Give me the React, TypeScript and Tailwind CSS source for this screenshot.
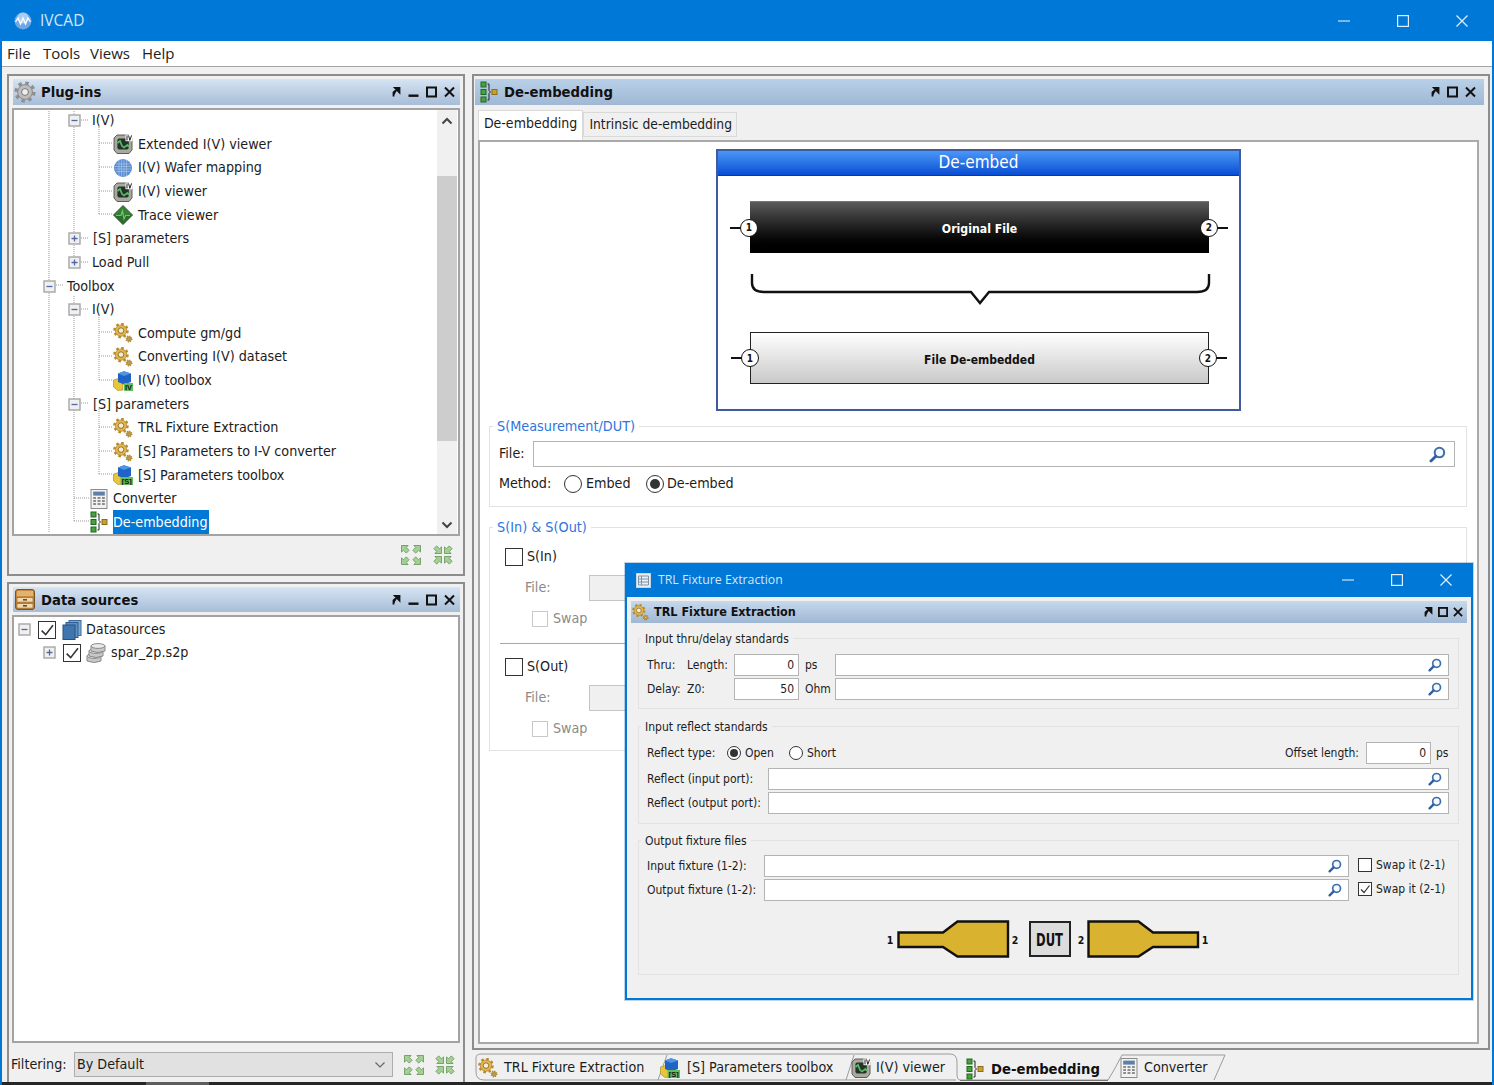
import React from "react";

const I = ({ w = 20, h = 20, vb = "0 0 20 20", children, className = "" }: any) => (
  <svg width={w} height={h} viewBox={vb} className={"shrink-0 " + className}>{children}</svg>
);

const BigGear = () => (
  <I w={22} h={22} vb="0 0 22 22">
    <circle cx="11" cy="11" r="8.8" fill="none" stroke="#8f8f8f" strokeWidth="3.6" strokeDasharray="3.45 3.46" />
    <circle cx="11" cy="11" r="7.4" fill="#bcbcbc" stroke="#8a8a8a" />
    <circle cx="11" cy="11" r="3.4" fill="#efefef" stroke="#777" />
  </I>
);

const OneGear = ({ cx, cy, r, t }: any) => {
  const d = ((2 * Math.PI * r) / 16).toFixed(3);
  return (
    <g>
      <circle cx={cx} cy={cy} r={r} fill="none" stroke="#b98c2a" strokeWidth={t} strokeDasharray={d + " " + d} />
      <circle cx={cx} cy={cy} r={r - t / 2 + 0.3} fill="#e4b54a" stroke="#96752a" strokeWidth="0.6" />
      <circle cx={cx} cy={cy} r={r * 0.42} fill="#f4ecd4" stroke="#7c5e1c" strokeWidth="0.8" />
    </g>
  );
};
const Gears = () => (
  <I>
    <OneGear cx={8} cy={7.6} r={6.6} t={2.4} />
    <OneGear cx={16} cy={16} r={2.8} t={1.5} />
  </I>
);

const Viewer = () => (
  <I>
    <path d="M4 1 H16 L19 4.5 V16 L16 19.5 H4 L1 16 V4 Z" fill="#a9a99f" stroke="#50504a" strokeWidth="0.9" />
    <rect x="4.4" y="4.5" width="11.4" height="11" rx="2" fill="#24332a" />
    <path d="M4.5 9 L7 7 L9 12 L11 13.4 L14.5 11 L16 13" fill="none" stroke="#59b866" strokeWidth="1.7" />
    <rect x="12.5" y="0.6" width="7" height="6.6" fill="#fff" />
    <path d="M14 1.4 V6.4 M15.6 1.4 L16.8 6.4 L18.6 1.4" fill="none" stroke="#222" strokeWidth="1" />
  </I>
);

const Wafer = () => (
  <I>
    <circle cx="10" cy="10" r="9" fill="#5b8dd0" />
    <path d="M3 6 H17 M2 8.5 H18 M2 11 H18 M3 13.5 H17 M6 2 V18 M8.5 1.5 V18.5 M11 1.5 V18.5 M13.5 2 V18" stroke="#a9c6ec" strokeWidth="0.7" />
  </I>
);

const Trace = () => (
  <I>
    <path d="M10 0.5 L19.5 10 L10 19.5 L0.5 10Z" fill="#3a7d38" stroke="#2e5f2e" />
    <path d="M10 10 L19.5 10 L10 19.5 L0.5 10Z" fill="#2f6a30" />
    <path d="M3 10.5 H8 L9.5 6 L11 14 L12.5 10.5 H17" fill="none" stroke="#62d060" strokeWidth="1.2" />
  </I>
);

const Toolbox = ({ s }: { s: boolean }) => (
  <I>
    <path d="M0.5 9 L7 7 L10 9 V19 L5 19.5 L0.5 16Z" fill="#e8c63c" stroke="#a0851f" strokeWidth="0.6" />
    <path d="M5 2.5 L11 0.3 L18 2.5 V11 L11 13.5 L5 11Z" fill="#1f63c6" />
    <path d="M5 2.5 L11 5 L18 2.5 L11 0.3Z" fill="#4f94e6" />
    <rect x={s ? 7.5 : 11} y="12" width={s ? 12.5 : 9} height="8" fill="#62bd5f" />
    <text x={s ? 13.7 : 15.5} y="19" textAnchor="middle" fontSize="7.5" fontWeight="700" fill="#111" fontFamily="Liberation Sans">{s ? "[S]" : "IV"}</text>
  </I>
);

const Calc = () => (
  <I w={18} h={20} vb="0 0 18 20">
    <rect x="1" y="0.5" width="16" height="19" fill="#f2f2f2" stroke="#8b8b8b" />
    <rect x="3.2" y="2.6" width="11.6" height="4" fill="#5e7fa8" />
    <path d="M3.2 9 H6 M7.5 9 H10.5 M12 9 H14.8 M3.2 12 H6 M7.5 12 H10.5 M12 12 H14.8 M3.2 15 H6 M7.5 15 H10.5 M12 15 H14.8" stroke="#8d8d8d" strokeWidth="1.8" />
  </I>
);

const Deembed = () => (
  <I w={18} h={22} vb="0 0 18 22">
    <rect x="1" y="1" width="5" height="5" fill="#4aa03f" stroke="#1d6a1d" />
    <rect x="1" y="8.5" width="5" height="5" fill="#4aa03f" stroke="#1d6a1d" />
    <rect x="1" y="16" width="5" height="5" fill="#4aa03f" stroke="#1d6a1d" />
    <path d="M7.5 3 H9 V9.5 L10.5 11 L9 12.5 V19 H7.5" fill="none" stroke="#222" strokeWidth="1" />
    <rect x="12" y="8.5" width="5" height="5" fill="#c9a12f" stroke="#8a6e18" />
  </I>
);

const Books = () => (
  <I>
    <rect x="7" y="0.5" width="12" height="15" fill="#7fa6cf" stroke="#3c6c9e" />
    <rect x="4" y="2.5" width="12" height="15" fill="#5f8fc0" stroke="#2f5f92" />
    <rect x="1" y="5" width="12" height="14.5" fill="#3f76b0" stroke="#24527f" />
  </I>
);

const DB = () => (
  <I w={21} h={21} vb="0 0 21 21">
    {[13, 8, 3].map((y, i) => (
      <g key={i}>
        <path d={`M${i * 2 + 1} ${y + 1} V${y + 6} Q${i * 2 + 8} ${y + 9} ${i * 2 + 15} ${y + 6} V${y + 1}Z`} fill="#c8c8c8" stroke="#8a8a8a" />
        <ellipse cx={i * 2 + 8} cy={y + 1} rx="7" ry="2.4" fill="#e9e9e9" stroke="#8a8a8a" />
      </g>
    ))}
  </I>
);

const Drawer = () => (
  <I w={20} h={21} vb="0 0 20 21">
    <rect x="0.5" y="0.5" width="19" height="20" rx="2.5" fill="#c8883e" stroke="#7e5320" />
    <rect x="2" y="2" width="16" height="5" fill="#e2b36e" />
    <rect x="2" y="8.5" width="16" height="4.6" fill="#f0d9ae" stroke="#8a5c24" strokeWidth="0.6" />
    <rect x="2" y="14.5" width="16" height="4.6" fill="#f0d9ae" stroke="#8a5c24" strokeWidth="0.6" />
    <rect x="8" y="10" width="4" height="1.6" fill="#6e4a1c" />
    <rect x="8" y="16" width="4" height="1.6" fill="#6e4a1c" />
  </I>
);

const Expander = ({ open }: { open?: boolean }) => (
  <I w={13} h={13} vb="0 0 13 13">
    <rect x="1" y="1" width="11" height="11" fill="#f0f0f0" stroke="#a6a6a6" strokeWidth="1.4" />
    <path d={open ? "M3.5 6.5 H9.5" : "M3.5 6.5 H9.5 M6.5 3.5 V9.5"} stroke="#5267a8" strokeWidth="1.3" />
  </I>
);

const Search = ({ big }: { big?: boolean }) => (
  <I w={big ? 17 : 14} h={big ? 17 : 14} vb="0 0 14 14">
    <circle cx="8.6" cy="5.4" r="3.9" fill="#f5f9fd" stroke="#3f70ad" strokeWidth="1.7" />
    <path d="M5.6 8.4 L1.6 12.4" stroke="#2e5f9f" strokeWidth="2.3" strokeLinecap="round" />
  </I>
);

const DockBtns = ({ small, noMin }: { small?: boolean; noMin?: boolean }) => (
  <div className={"flex items-center " + (small ? "gap-[5px]" : "gap-[7px]")}>
    <I w={10} h={12} vb="0 0 10 12">
      <path d="M2.5 10.5 V6.5 L7 2.5 M4 2 H8.5 V6.5Z" fill="#111" stroke="#111" strokeWidth="1.8" />
    </I>
    {!noMin && (
      <I w={11} h={12} vb="0 0 11 12">
        <rect x="0.5" y="8.5" width="10" height="2.4" fill="#111" />
      </I>
    )}
    <I w={small ? 10 : 11} h={12} vb="0 0 11 12">
      <rect x="1" y="1.5" width="9" height="9" fill="none" stroke="#111" strokeWidth="2" />
    </I>
    <I w={small ? 10 : 11} h={12} vb="0 0 11 12">
      <path d="M1 1.5 L10 10.5 M10 1.5 L1 10.5" stroke="#111" strokeWidth="2" />
    </I>
  </div>
);

const Arrow = ({ x, y, r }: any) => (
  <path transform={`translate(${x} ${y}) rotate(${r})`} d="M-4 -4 H2.6 L0.8 -2 L3.6 0.8 L0.8 3.6 L-2 0.8 L-4 2.6Z" fill="#a5cf97" stroke="#5f9453" strokeWidth="0.8" />
);
const ExpandAll = ({ inward }: { inward?: boolean }) => (
  <I w={22} h={22} vb="0 0 22 22">
    <Arrow x={5.5} y={5.5} r={inward ? 180 : 0} />
    <Arrow x={16.5} y={5.5} r={inward ? 270 : 90} />
    <Arrow x={16.5} y={16.5} r={inward ? 0 : 180} />
    <Arrow x={5.5} y={16.5} r={inward ? 90 : 270} />
  </I>
);

const Chev = ({ up, thin }: { up?: boolean; thin?: boolean }) => (
  <I w={12} h={12} vb="0 0 12 12">
    <path d={up ? "M1.5 8.5 L6 4 L10.5 8.5" : "M1.5 3.5 L6 8 L10.5 3.5"} fill="none" stroke={thin ? "#666" : "#444"} strokeWidth={thin ? 1.2 : 2} />
  </I>
);

const Radio = ({ on, big }: { on?: boolean; big?: boolean }) => (
  <span className={"flex items-center justify-center rounded-full border-[1.5px] border-[#333] bg-white shrink-0 " + (big ? "w-[18px] h-[18px]" : "w-[14px] h-[14px]")}>
    {on && <span className={"rounded-full bg-[#333] " + (big ? "w-[10px] h-[10px]" : "w-[8px] h-[8px]")} />}
  </span>
);

const Check = ({ on, size = "w-[18px] h-[18px]", dim }: any) => (
  <span className={"flex items-center justify-center border-[1.5px] shrink-0 bg-white " + size + " " + (dim ? "border-[#c9c9c9]" : "border-[#333]")}>
    {on && (
      <svg viewBox="0 0 12 12" className="w-full h-full">
        <path d="M2 6.5 L5 9.5 L10.5 2.5" fill="none" stroke="#333" strokeWidth="1.2" />
      </svg>
    )}
  </span>
);

const rows: any[] = [
  { k: "f", pad: "pl-[54px]", gap: "ml-[11px]", open: true, t: "I(V)" },
  { k: "l", ic: <Viewer />, t: "Extended I(V) viewer" },
  { k: "l", ic: <Wafer />, t: "I(V) Wafer mapping" },
  { k: "l", ic: <Viewer />, t: "I(V) viewer" },
  { k: "l", ic: <Trace />, t: "Trace viewer" },
  { k: "f", pad: "pl-[54px]", gap: "ml-[12px]", t: "[S] parameters" },
  { k: "f", pad: "pl-[54px]", gap: "ml-[11px]", t: "Load Pull" },
  { k: "f", pad: "pl-[29px]", gap: "ml-[11px]", open: true, t: "Toolbox" },
  { k: "f", pad: "pl-[54px]", gap: "ml-[11px]", open: true, t: "I(V)" },
  { k: "l", ic: <Gears />, t: "Compute gm/gd" },
  { k: "l", ic: <Gears />, t: "Converting I(V) dataset" },
  { k: "l", ic: <Toolbox s={false} />, t: "I(V) toolbox" },
  { k: "f", pad: "pl-[54px]", gap: "ml-[12px]", open: true, t: "[S] parameters" },
  { k: "l", ic: <Gears />, t: "TRL Fixture Extraction" },
  { k: "l", ic: <Gears />, t: "[S] Parameters to I-V converter" },
  { k: "l", ic: <Toolbox s />, t: "[S] Parameters toolbox" },
  { k: "m", ic: <Calc />, t: "Converter" },
  { k: "m", ic: <Deembed />, t: "De-embedding", sel: true },
];

const TreeRow = ({ r }: { r: any }) => {
  if (r.k === "f")
    return (
      <div className={"flex items-center h-[23.63px] " + r.pad}>
        <Expander open={r.open} />
        <span className={r.gap}>{r.t}</span>
      </div>
    );
  if (r.k === "l")
    return (
      <div className="flex items-center h-[23.63px] pl-[99px]">
        {r.ic}
        <span className="ml-[5px]">{r.t}</span>
      </div>
    );
  return (
    <div className="flex items-center h-[23.63px] pl-[76px]">
      {r.ic}
      <span className={"ml-[5px] " + (r.sel ? "bg-[#0078d7] text-white h-[24px] w-[96px] flex items-center" : "")}>{r.t}</span>
    </div>
  );
};

const TreeLines = () => (
  <svg width="421" height="424" viewBox="14 110 421 424" className="absolute left-0 top-0">
    <path
      d="M49 110 V534 M74 110 V262 M74 297 V522 M99 128 V215 M99 316 V381 M99 410 V475 M81 121 H89 M99 144 H112 M99 168 H112 M99 192 H112 M99 215 H112 M81 239 H89 M81 263 H89 M56 286 H63 M81 310 H89 M99 333 H112 M99 357 H112 M99 381 H112 M81 404 H89 M99 428 H112 M99 452 H112 M99 475 H112 M74 499 H89 M74 522 H89"
      fill="none"
      stroke="#9a9a9a"
      strokeDasharray="1 1"
    />
  </svg>
);

const Input = ({ cls, search, big, val, disabled }: any) => (
  <div className={"flex items-center justify-end border-[1.5px] shrink-0 " + (disabled ? "bg-[#f0f0f0] border-[#c4c4c4]" : "bg-white border-[#b4b4b4]") + " " + cls}>
    {search && <span className={big ? "mr-[8px]" : "mr-[6px]"}><Search big={big} /></span>}
    {val && <span className="pr-[4px]">{val}</span>}
  </div>
);

const Group = ({ legend, blue, cls, children }: any) => (
  <div className={"relative border border-[#e2e2e2] " + cls}>
    <span className={"absolute px-[4px] leading-[18px] " + (blue ? "-top-[10px] left-[3px] bg-white text-[#2f74df] text-[14.3px]" : "-top-[9px] left-[2px] bg-[#f0f0f0]")}>{legend}</span>
    {children}
  </div>
);

const Fixture = () => (
  <svg width="330" height="38" viewBox="884 920 330 38" className="block">
    <path d="M898.5 932.5 H943 L957.5 921.5 H1008 V956.5 H957.5 L943 947 H898.5Z" fill="#d9b230" stroke="#111" strokeWidth="2.4" />
    <path d="M1198 932.5 H1153 L1138.5 921.5 H1088.5 V956.5 H1138.5 L1153 947 H1198Z" fill="#d9b230" stroke="#111" strokeWidth="2.4" />
    <rect x="1030" y="922" width="40" height="34" fill="#dcdcdc" stroke="#222" strokeWidth="2" />
    <g fontFamily="DejaVu Sans Condensed, Liberation Sans, sans-serif" fontWeight="700" fill="#111">
      <text x="1036" y="946" fontSize="18" textLength="27" lengthAdjust="spacingAndGlyphs">DUT</text>
      <text x="890" y="944" textAnchor="middle" fontSize="10.5">1</text>
      <text x="1015" y="944" textAnchor="middle" fontSize="10.5">2</text>
      <text x="1081" y="944" textAnchor="middle" fontSize="10.5">2</text>
      <text x="1205" y="944" textAnchor="middle" fontSize="10.5">1</text>
    </g>
  </svg>
);

const TabOutline = () => (
  <svg width="770" height="32" viewBox="472 1050 770 32" className="absolute left-0 top-0">
    <path
      d="M476 1058 Q476 1054 481 1054 H950 Q957 1054 957 1062 V1074 Q957 1080 960 1080 H1108 L1114 1070 L1122 1055 H1225 L1214 1080 M476 1058 V1072 Q476 1080 484 1080 H658 L667 1055 M658 1080 H846 L854 1055 M846 1080 H956"
      fill="none"
      stroke="#9c9c9c"
    />
    <path d="M960 1080.5 H1108" stroke="#777" />
  </svg>
);

const WinBtns = ({ small }: { small?: boolean }) => (
  <div className={"flex items-center ml-auto " + (small ? "gap-[36px] pr-[18px]" : "gap-[46px] pr-[25px]")}>
    <svg width="14" height="12" viewBox="0 0 14 12"><path d="M1 6 H13" stroke="#cfe3f5" strokeWidth="1.2" /></svg>
    <svg width="12" height="12" viewBox="0 0 12 12"><rect x="0.6" y="0.6" width="10.8" height="10.8" fill="none" stroke="#e4eff9" strokeWidth="1.2" /></svg>
    <svg width="14" height="14" viewBox="0 0 14 14"><path d="M1.5 1.5 L12.5 12.5 M12.5 1.5 L1.5 12.5" stroke="#e4eff9" strokeWidth="1.2" /></svg>
  </div>
);

const Pin = ({ n, side }: { n: string; side: "l" | "r" }) => (
  <span className={"absolute top-1/2 -translate-y-1/2 flex items-center " + (side === "l" ? "-left-[20px]" : "-right-[19px] flex-row-reverse")}>
    <span className="w-[11px] h-[2px] bg-[#111]" />
    <span className="flex items-center justify-center w-[18px] h-[18px] rounded-full border-[1.5px] border-[#111] bg-white text-[#111] text-[10px] font-bold -mx-[1px] z-10">{n}</span>
  </span>
);

export default function App() {
  return (
    <div className="relative w-[1494px] h-[1085px] flex flex-col overflow-hidden border-x-2 border-[#0078d7] bg-[#f0f0f0] text-[14.2px] text-[#1c1c1c] font-['DejaVu_Sans_Condensed','Noto_Sans',sans-serif]">
      {/* title bar */}
      <div className="h-[41px] shrink-0 -mx-[2px] bg-[#0078d7] flex items-center pl-[13px] font-['Open_Sans',sans-serif]">
        <svg width="20" height="20" viewBox="0 0 20 20">
          <circle cx="10" cy="10" r="8.5" fill="#6fa6e6" />
          <circle cx="10" cy="7" r="5.5" fill="#a9cdf2" />
          <path d="M2.5 11 L5 7 L7.5 13 L10 7 L12.5 13 L15 7 L17.5 11" fill="none" stroke="#fff" strokeWidth="1.3" />
        </svg>
        <span className="ml-[7px] text-[15.5px] text-[#d5e6f6]">IVCAD</span>
        <WinBtns />
      </div>
      {/* menu */}
      <div className="h-[26px] shrink-0 bg-white border-b border-[#a5a5a5] flex items-center pl-[5px] text-[15px] text-[#222] font-['Open_Sans',sans-serif]">
        <span className="w-[36px]">File</span>
        <span className="w-[47px]">Tools</span>
        <span className="w-[52px]">Views</span>
        <span>Help</span>
      </div>
      {/* main */}
      <div className="flex-1 min-h-0 flex pt-[7px]">
        {/* left */}
        <div className="w-[458px] ml-[5px] shrink-0 flex flex-col gap-[6px]">
          <div className="h-[502px] shrink-0 border-2 border-[#8d8d8d] px-[3px] pt-[3px] flex flex-col">
            <div className="h-[26px] ml-[1px] shrink-0 bg-linear-to-b from-[#d6e4f3] to-[#a7bdd7] flex items-center pl-[1px] pr-[5px]">
              <BigGear />
              <span className="ml-[5px] font-bold text-[14.7px] text-[#111]">Plug-ins</span>
              <span className="ml-auto"><DockBtns /></span>
            </div>
            <div className="mt-[3px] h-[428px] shrink-0 border-2 border-[#a3a3a3] bg-white flex overflow-hidden">
              <div className="relative flex-1 -mt-[1px]">
                <TreeLines />
                <div className="relative">
                  {rows.map((r, i) => <TreeRow key={i} r={r} />)}
                </div>
              </div>
              <div className="w-[20px] mr-[1px] bg-[#f0f0f0] flex flex-col items-center">
                <div className="h-[22px] flex items-center"><Chev up /></div>
                <div className="h-[44px]" />
                <div className="h-[265px] w-full bg-[#cdcdcd]" />
                <div className="flex-1" />
                <div className="h-[18px] flex items-center"><Chev /></div>
              </div>
            </div>
            <div className="flex-1 flex items-center justify-end gap-[10px] pr-[6px]">
              <ExpandAll />
              <ExpandAll inward />
            </div>
          </div>
          <div className="flex-1 min-h-0 border-t-2 border-x-2 border-[#8d8d8d] px-[3px] pt-[3px] flex flex-col">
            <div className="h-[25px] ml-[1px] shrink-0 bg-linear-to-b from-[#d6e4f3] to-[#a7bdd7] flex items-center pl-[2px] pr-[5px]">
              <Drawer />
              <span className="ml-[6px] mt-[2px] font-bold text-[14.7px] text-[#111]">Data sources</span>
              <span className="ml-auto"><DockBtns /></span>
            </div>
            <div className="mt-[3px] h-[428px] shrink-0 border-2 border-[#a3a3a3] bg-white pl-[4px] pt-[1px]">
              <div className="flex items-center h-[23px]">
                <Expander open />
                <span className="ml-[7px]"><Check on /></span>
                <span className="ml-[6px]"><Books /></span>
                <span className="ml-[4px]">Datasources</span>
              </div>
              <div className="flex items-center h-[23px] pl-[25px]">
                <Expander />
                <span className="ml-[7px]"><Check on /></span>
                <span className="ml-[5px]"><DB /></span>
                <span className="ml-[4px]">spar_2p.s2p</span>
              </div>
            </div>
            <div className="flex-1 flex items-center pt-[4px]">
              <span className="w-[63px] -ml-[1px]">Filtering:</span>
              <div className="w-[319px] h-[25px] bg-[#e1e1e1] border border-[#adadad] flex items-center pl-[2px] pr-[6px]">
                <span>By Default</span>
                <span className="ml-auto"><Chev thin /></span>
              </div>
              <div className="ml-[10px] flex gap-[9px]">
                <ExpandAll />
                <ExpandAll inward />
              </div>
            </div>
          </div>
        </div>
        {/* right */}
        <div className="flex-1 min-w-0 ml-[7px] mr-[2px] flex flex-col">
          <div className="flex-1 min-h-0 border-2 border-[#8d8d8d] pt-[3px] px-[1px] pr-[4px] flex flex-col">
            <div className="h-[26px] shrink-0 bg-linear-to-b from-[#b9d0e8] to-[#a0b8d4] flex items-center pl-[5px] pr-[8px]">
              <Deembed />
              <span className="ml-[6px] font-bold text-[14.7px] text-[#111]">De-embedding</span>
              <span className="ml-auto"><DockBtns noMin /></span>
            </div>
            <div className="h-[35px] shrink-0 pl-[3px] pt-[5px] flex items-start">
              <div className="relative z-10 h-[30px] w-[105px] bg-white border border-b-0 border-[#d9d9d9] flex items-center justify-center pb-[5px] text-[14px]">De-embedding</div>
              <div className="mt-[2px] h-[25px] w-[154px] bg-[#f0f0f0] border border-[#d9d9d9] flex items-center justify-end pr-[4px] text-[13.7px]">Intrinsic de-embedding</div>
            </div>
            <div className="flex-1 min-h-0 ml-[3px] w-[1001px] border-2 border-[#a9a9a9] bg-white pl-[9px]">
              {/* diagram */}
              <div className="ml-[227px] mt-[7px] w-[525px] h-[262px] border-2 border-[#3f5aa0] flex flex-col">
                <div className="h-[25px] shrink-0 bg-linear-to-b from-[#4a97f7] to-[#0a4cd2] border-b border-[#0a3a9e] flex items-center justify-center text-white text-[17px]">De-embed</div>
                <div className="relative mt-[25px] ml-[32px] w-[459px] h-[52px] border-t border-[#777] bg-linear-to-b from-[#5c5c5c] to-black text-white font-bold text-[12.2px] flex items-center justify-center pt-[3px]">
                  Original File
                  <Pin n="1" side="l" />
                  <Pin n="2" side="r" />
                </div>
                <svg width="470" height="36" viewBox="0 0 470 36" className="ml-[32px] mt-[20px] -mb-[6px] shrink-0">
                  <path d="M2 1 V10 Q2 19 14 19 H221 L230 30 L239 19 H447 Q459 19 459 10 V1" fill="none" stroke="#111" strokeWidth="2.4" />
                </svg>
                <div className="relative mt-[29px] ml-[32px] w-[459px] h-[52px] border border-[#222] bg-linear-to-b from-white to-[#c9c9c9] text-[#111] font-bold text-[12px] flex items-center justify-center pt-[3px]">
                  File De-embedded
                  <Pin n="1" side="l" />
                  <Pin n="2" side="r" />
                </div>
              </div>
              <Group blue legend="S(Measurement/DUT)" cls="mt-[15px] w-[978px] h-[81px]">
                <div className="pt-[14px] pl-[9px] flex items-center">
                  <span className="w-[34px]">File:</span>
                  <Input cls="w-[922px] h-[26px]" search big />
                </div>
                <div className="mt-[7px] pl-[9px] flex items-center h-[20px]">
                  <span className="w-[65px]">Method:</span>
                  <Radio big />
                  <span className="ml-[4px] w-[60px]">Embed</span>
                  <Radio on big />
                  <span className="ml-[3px]">De-embed</span>
                </div>
              </Group>
              <Group blue legend="S(In) & S(Out)" cls="mt-[20px] w-[978px] h-[224px]">
                <div className="mt-[20px] h-[18px] pl-[15px] flex items-center">
                  <Check />
                  <span className="ml-[4px]">S(In)</span>
                </div>
                <div className="mt-[9px] h-[26px] pl-[35px] flex items-center text-[#8a8a8a]">
                  <span className="w-[64px]">File:</span>
                  <Input cls="w-[400px] h-[26px]" disabled />
                </div>
                <div className="mt-[10px] h-[16px] pl-[42px] flex items-center text-[#8a8a8a]">
                  <Check dim size="w-[16px] h-[16px]" />
                  <span className="ml-[5px]">Swap</span>
                </div>
                <div className="mt-[16px] mx-[10px] border-t border-[#a8a8a8]" />
                <div className="mt-[14px] h-[18px] pl-[15px] flex items-center">
                  <Check />
                  <span className="ml-[4px]">S(Out)</span>
                </div>
                <div className="mt-[9px] h-[26px] pl-[35px] flex items-center text-[#8a8a8a]">
                  <span className="w-[64px]">File:</span>
                  <Input cls="w-[400px] h-[26px]" disabled />
                </div>
                <div className="mt-[10px] h-[16px] pl-[42px] flex items-center text-[#8a8a8a]">
                  <Check dim size="w-[16px] h-[16px]" />
                  <span className="ml-[5px]">Swap</span>
                </div>
              </Group>
            </div>
            <div className="h-[4px] shrink-0" />
          </div>
          {/* bottom tabs */}
          <div className="relative h-[32px] shrink-0 flex items-center pt-[4px]">
            <TabOutline />
            <div className="relative w-[188px] pl-[6px] flex items-center"><Gears /><span className="ml-[6px]">TRL Fixture Extraction</span></div>
            <div className="relative w-[190px] flex items-center"><Toolbox s /><span className="ml-[7px]">[S] Parameters toolbox</span></div>
            <div className="relative w-[110px] pl-[1px] flex items-center"><Viewer /><span className="ml-[5px]">I(V) viewer</span></div>
            <div className="relative w-[155px] pl-[6px] pt-[3px] flex items-center"><Deembed /><span className="ml-[7px] font-bold text-[14.7px] text-[#111]">De-embedding</span></div>
            <div className="relative w-[115px] pl-[5px] flex items-center"><Calc /><span className="ml-[6px]">Converter</span></div>
          </div>
        </div>
      </div>
      {/* taskbar sliver */}
      <div className="h-[3px] shrink-0 -mx-[2px] bg-[#262626] flex">
        <div className="ml-[146px] w-[63px] bg-[#5d5d5d]" />
      </div>

      {/* floating window */}
      <div className="absolute left-[623px] top-[563px] w-[848px] h-[437px] border-2 border-t-0 border-[#0078d7] bg-[#f0f0f0] flex flex-col text-[12px] shadow-[0_0_0_1px_rgba(0,80,160,0.25)]">
        <div className="h-[34px] shrink-0 bg-[#0078d7] flex items-center pl-[9px] text-[#d5e6f6] font-['Open_Sans',sans-serif] text-[12.3px]">
          <svg width="15" height="15" viewBox="0 0 15 15">
            <rect x="0.5" y="0.5" width="14" height="14" fill="#e9eff5" stroke="#c5d5e5" />
            <path d="M2.5 3 H12.5 V12 H2.5Z M5.5 3 V12 M2.5 6 H12.5 M2.5 9 H12.5" fill="none" stroke="#7f93a8" />
          </svg>
          <span className="ml-[7px]">TRL Fixture Extraction</span>
          <WinBtns small />
        </div>
        <div className="mt-[4px] mx-[4px] h-[22px] shrink-0 bg-linear-to-b from-[#c6d9ec] to-[#a0b8d4] flex items-center pl-[1px] pr-[4px]">
          <I w={17} h={17}><OneGear cx={8} cy={7.6} r={6.6} t={2.4} /><OneGear cx={16} cy={16} r={2.8} t={1.5} /></I>
          <span className="ml-[5px] font-bold text-[12.5px] text-[#111]">TRL Fixture Extraction</span>
          <span className="ml-auto"><DockBtns small noMin /></span>
        </div>
        <Group legend="Input thru/delay standards" cls="ml-[11px] mt-[15px] w-[821px] h-[71px] shrink-0">
          <div className="pt-[15px] pl-[8px] flex items-center h-[37px]">
            <span className="w-[40px]">Thru:</span>
            <span className="w-[47px]">Length:</span>
            <Input cls="w-[65px] h-[22px]" val="0" />
            <span className="ml-[6px] w-[30px]">ps</span>
            <Input cls="w-[614px] h-[22px]" search />
          </div>
          <div className="mt-[2px] pl-[8px] flex items-center">
            <span className="w-[40px]">Delay:</span>
            <span className="w-[47px]">Z0:</span>
            <Input cls="w-[65px] h-[22px]" val="50" />
            <span className="ml-[6px] w-[30px]">Ohm</span>
            <Input cls="w-[614px] h-[22px]" search />
          </div>
        </Group>
        <Group legend="Input reflect standards" cls="ml-[11px] mt-[17px] w-[821px] h-[98px] shrink-0">
          <div className="pt-[15px] pl-[8px] flex items-center h-[37px]">
            <span className="w-[80px]">Reflect type:</span>
            <Radio on />
            <span className="ml-[4px] w-[44px]">Open</span>
            <Radio />
            <span className="ml-[4px]">Short</span>
            <span className="ml-auto mr-[7px]">Offset length:</span>
            <Input cls="w-[65px] h-[22px]" val="0" />
            <span className="ml-[5px] mr-[9px] w-[13px]">ps</span>
          </div>
          <div className="mt-[4px] pl-[8px] flex items-center">
            <span className="w-[121px]">Reflect (input port):</span>
            <Input cls="w-[681px] h-[22px]" search />
          </div>
          <div className="mt-[2px] pl-[8px] flex items-center">
            <span className="w-[121px]">Reflect (output port):</span>
            <Input cls="w-[681px] h-[22px]" search />
          </div>
        </Group>
        <Group legend="Output fixture files" cls="ml-[11px] mt-[16px] w-[821px] h-[135px] shrink-0">
          <div className="pt-[14px] pl-[8px] flex items-center">
            <span className="w-[117px]">Input fixture (1-2):</span>
            <Input cls="w-[585px] h-[22px]" search />
            <span className="ml-[9px] -mt-[3px]"><Check size="w-[14px] h-[14px]" /></span>
            <span className="ml-[4px] -mt-[3px]">Swap it (2-1)</span>
          </div>
          <div className="mt-[2px] pl-[8px] flex items-center">
            <span className="w-[117px]">Output fixture (1-2):</span>
            <Input cls="w-[585px] h-[22px]" search />
            <span className="ml-[9px] -mt-[2px]"><Check on size="w-[14px] h-[14px]" /></span>
            <span className="ml-[4px] -mt-[2px]">Swap it (2-1)</span>
          </div>
          <div className="mt-[19px] flex justify-center">
            <Fixture />
          </div>
        </Group>
      </div>
    </div>
  );
}
